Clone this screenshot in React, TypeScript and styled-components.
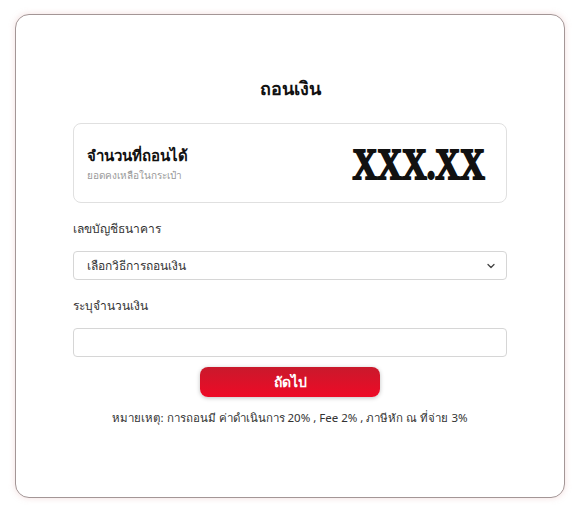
import React from 'react';
import styled, { createGlobalStyle } from 'styled-components';

const GlobalStyle = createGlobalStyle`
	html, body {
		margin: 0;
		padding: 0;
		background: #ffffff;
	}
	body {
		font-family: "Noto Sans", "Liberation Sans", sans-serif;
		color: #222;
	}
`;

function Chevron(){
	return (
		<svg width="10" height="10" viewBox="0 0 10 10" fill="none">
			<path d="M2 3.5 L5 6.5 L8 3.5" stroke="#444" strokeWidth="1.3" strokeLinecap="round" strokeLinejoin="round" />
		</svg>
	);
}

export default function App(): JSX.Element{
	return (
		<>
			<GlobalStyle />
			<Page>
				<Card>
					<Title>ถอนเงิน</Title>
					<BalanceBox>
						<div>
							<BalanceLabel>จำนวนที่ถอนได้</BalanceLabel>
							<BalanceSub>ยอดคงเหลือในกระเป๋า</BalanceSub>
						</div>
						<Amount>XXX.XX</Amount>
					</BalanceBox>
					<Field>
						<Label>เลขบัญชีธนาคาร</Label>
						<SelectBox>
							<span>เลือกวิธีการถอนเงิน</span>
							<Chevron />
						</SelectBox>
					</Field>
					<Field>
						<Label>ระบุจำนวนเงิน</Label>
						<Input type="text" />
					</Field>
					<NextButton>ถัดไป</NextButton>
					<Note>หมายเหตุ: การถอนมี ค่าดำเนินการ 20% , Fee 2% , ภาษีหัก ณ ที่จ่าย 3%</Note>
				</Card>
			</Page>
		</>
	);
}

const Page = styled.div`
	padding: 14px 16px 15px 15px;
`;

const Card = styled.div`
	height: 484px;
	box-sizing: border-box;
	border: 1px solid #a39696;
	border-radius: 14px;
	box-shadow: 0 0 6px rgba(220, 160, 160, 0.35);
	background: #fff;
	display: flex;
	flex-direction: column;
	align-items: center;
	padding: 59px 57px 0 57px;
`;

const Title = styled.h1`
	margin: 0;
	font-size: 18px;
	font-weight: 700;
	line-height: 28px;
	color: #111;
`;

const BalanceBox = styled.div`
	margin-top: 21px;
	width: 100%;
	height: 80px;
	box-sizing: border-box;
	border: 1px solid #e0e0e0;
	border-radius: 8px;
	display: flex;
	align-items: center;
	justify-content: space-between;
	padding: 0 21px 0 13px;
`;

const BalanceLabel = styled.div`
	font-size: 15px;
	font-weight: 700;
	color: #111;
	line-height: 22px;
`;

const BalanceSub = styled.div`
	font-size: 10px;
	color: #999;
	margin-top: 2px;
`;

const Amount = styled.div`
	font-family: "Liberation Serif", serif;
	font-weight: 900;
	font-size: 44px;
	line-height: 44px;
	color: #111;
	-webkit-text-stroke: 2px #111;
	transform: scaleX(0.78);
	transform-origin: right center;
	margin-top: 4px;
`;

const Field = styled.div`
	width: 100%;
	margin-top: 16px;
`;

const Label = styled.div`
	font-size: 12px;
	color: #333;
	line-height: 19px;
	margin-bottom: 13px;
`;

const SelectBox = styled.div`
	height: 29px;
	box-sizing: border-box;
	border: 1px solid #d6d6d6;
	border-radius: 4px;
	display: flex;
	align-items: center;
	justify-content: space-between;
	padding: 0 10px 0 13px;
	font-size: 12px;
	color: #333;
`;

const Input = styled.input`
	display: block;
	width: 100%;
	height: 29px;
	box-sizing: border-box;
	border: 1px solid #d6d6d6;
	border-radius: 4px;
	outline: none;
`;

const NextButton = styled.button`
	margin-top: 10px;
	width: 180px;
	height: 30px;
	border: none;
	border-radius: 8px;
	background: linear-gradient(180deg, #c9192c 0%, #ee0a26 100%);
	box-shadow: 0 1px 4px rgba(0, 0, 0, 0.25);
	color: #fff;
	font-family: "Noto Sans", sans-serif;
	font-size: 14px;
	font-weight: 700;
`;

const Note = styled.div`
	margin-top: 12px;
	font-size: 11.5px;
	color: #333;
`;
